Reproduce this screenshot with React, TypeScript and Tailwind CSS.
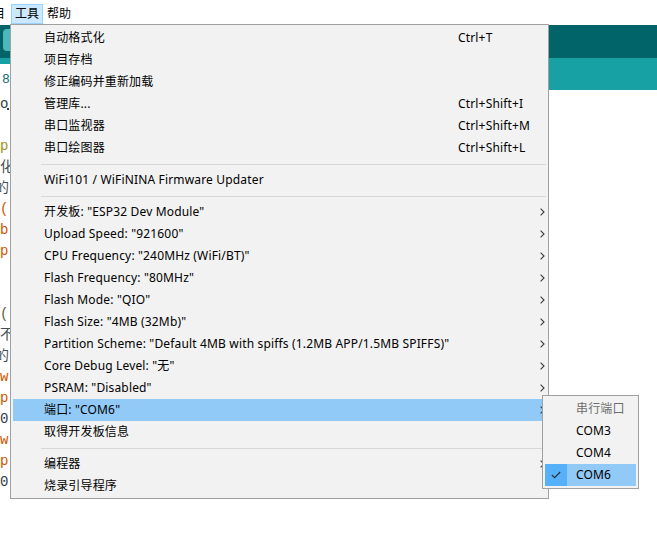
import React from 'react';

const uiFont = { fontFamily: '"Noto Sans", "Noto Sans CJK SC", sans-serif' };
const codeFont = { fontFamily: '"Liberation Mono", "Noto Sans CJK SC", monospace' };

type Item =
  | { kind: 'sep' }
  | { kind: 'item'; label: string; shortcut?: string; sub?: boolean; active?: boolean };

const items: Item[] = [
  { kind: 'item', label: '自动格式化', shortcut: 'Ctrl+T' },
  { kind: 'item', label: '项目存档' },
  { kind: 'item', label: '修正编码并重新加载' },
  { kind: 'item', label: '管理库...', shortcut: 'Ctrl+Shift+I' },
  { kind: 'item', label: '串口监视器', shortcut: 'Ctrl+Shift+M' },
  { kind: 'item', label: '串口绘图器', shortcut: 'Ctrl+Shift+L' },
  { kind: 'sep' },
  { kind: 'item', label: 'WiFi101 / WiFiNINA Firmware Updater' },
  { kind: 'sep' },
  { kind: 'item', label: '开发板: "ESP32 Dev Module"', sub: true },
  { kind: 'item', label: 'Upload Speed: "921600"', sub: true },
  { kind: 'item', label: 'CPU Frequency: "240MHz (WiFi/BT)"', sub: true },
  { kind: 'item', label: 'Flash Frequency: "80MHz"', sub: true },
  { kind: 'item', label: 'Flash Mode: "QIO"', sub: true },
  { kind: 'item', label: 'Flash Size: "4MB (32Mb)"', sub: true },
  { kind: 'item', label: 'Partition Scheme: "Default 4MB with spiffs (1.2MB APP/1.5MB SPIFFS)"', sub: true },
  { kind: 'item', label: 'Core Debug Level: "无"', sub: true },
  { kind: 'item', label: 'PSRAM: "Disabled"', sub: true },
  { kind: 'item', label: '端口: "COM6"', sub: true, active: true },
  { kind: 'item', label: '取得开发板信息' },
  { kind: 'sep' },
  { kind: 'item', label: '编程器', sub: true },
  { kind: 'item', label: '烧录引导程序' },
];

// editor is scrolled; only the first column peeks out left of the menu
const code: { text: string; color: string; shift?: boolean }[] = [
  { text: 'o', color: '#2f3a3e' },
  { text: '', color: '#434f54' },
  { text: 'p', color: '#a08f1c' },
  { text: '化', color: '#434f54' },
  { text: '的', color: '#434f54', shift: true },
  { text: '(', color: '#d35400' },
  { text: 'b', color: '#d35400' },
  { text: 'p', color: '#d35400' },
  { text: '', color: '#434f54' },
  { text: '', color: '#434f54' },
  { text: '(', color: '#5a5a3a' },
  { text: '不', color: '#434f54' },
  { text: '的', color: '#434f54', shift: true },
  { text: 'w', color: '#d35400' },
  { text: 'p', color: '#d35400' },
  { text: '0', color: '#2f3a4e' },
  { text: 'w', color: '#d35400' },
  { text: 'p', color: '#d35400' },
  { text: '0', color: '#2f3a4e' },
];

function Chevron() {
  return (
    <svg width="5" height="8" viewBox="0 0 5 8" className="ml-auto mr-[1px]">
      <path d="M0.6 0.6 L4 4 L0.6 7.4" fill="none" stroke="#3c3c3c" strokeWidth="1.1" />
    </svg>
  );
}

export default function App() {
  return (
    <div className="relative w-[657px] h-[533px] overflow-hidden bg-white text-black" style={uiFont}>
      {/* menu bar */}
      <div className="flex h-[24px] text-[12px]">
        <span className="-ml-[7px] mt-[4px] h-[20px] leading-[19px]">目</span>
        <span className="ml-[6px] mt-[4px] h-[20px] px-[3px] leading-[18px] border border-[#99d1ff] bg-[#cce8ff]">
          工具
        </span>
        <span className="ml-[4px] mt-[4px] h-[20px] leading-[19px]">帮助</span>
      </div>

      {/* toolbar */}
      <div className="mt-[1px] h-[33px] bg-[#006468] flex items-start">
        <div className="ml-[3px] mt-[4px] w-[26px] h-[22px] rounded-[4px] bg-[#4db7bb] flex items-center justify-center">
          <div className="w-[4px] h-[4px] bg-[#e6f4f4]" />
        </div>
      </div>

      {/* tab bar */}
      <div className="h-[32px] bg-[#17a1a5] flex items-end">
        <div className="h-[26px] w-[120px] bg-white pl-[2px] text-[13px] leading-[31px] text-[#0e6b6f]" style={codeFont}>
          8
        </div>
      </div>

      {/* editor */}
      <div className="pt-[4px] text-[14px] leading-[21px]" style={codeFont}>
        {code.map((l, i) => (
          <div key={i} className="h-[21px] whitespace-pre" style={{ color: l.color }}>
            <span className={l.shift ? '-ml-[5px] inline-block' : ''}>{l.text}</span>
            {i === 0 && <span className="-ml-[1px] inline-block w-[2px] h-[2px] bg-[#2f3a3e] align-[-2px]" />}
          </div>
        ))}
      </div>

      {/* tools menu */}
      <div className="absolute left-[10px] top-[24px] w-[539px] h-[475px] border border-[#a0a0a0] bg-[#f2f2f2] px-[2px] pt-[2px] text-[12px] tracking-[0.16px]">
        {items.map((it, i) =>
          it.kind === 'sep' ? (
            <div key={i} className="h-[10px] flex items-center">
              <div className="ml-[28px] h-px flex-1 bg-[#d7d7d7]" />
            </div>
          ) : (
            <div
              key={i}
              className={`h-[22px] flex items-center pl-[31px] whitespace-nowrap ${it.active ? 'bg-[#91c9f7]' : ''}`}
            >
              <span className="w-[414px] shrink-0">{it.label}</span>
              {it.shortcut && <span>{it.shortcut}</span>}
              {it.sub && <Chevron />}
            </div>
          )
        )}
      </div>

      {/* port submenu */}
      <div className="absolute left-[542px] top-[395px] w-[97px] h-[94px] border border-[#a0a0a0] bg-[#f2f2f2] p-[2px] text-[12px] tracking-[0.16px]">
        <div className="h-[22px] flex items-center pl-[31px] text-[#6d6d6d]">串行端口</div>
        <div className="h-[22px] flex items-center pl-[31px]">COM3</div>
        <div className="h-[22px] flex items-center pl-[31px]">COM4</div>
        <div className="h-[22px] flex items-center bg-[#91c9f7]">
          <div className="w-[22px] h-[22px] bg-[#56b0fa] flex items-center justify-center">
            <svg width="10" height="8" viewBox="0 0 10 8">
              <path d="M0.8 3.8 L3.6 6.6 L9.2 1" fill="none" stroke="#2b2b2b" strokeWidth="1.1" />
            </svg>
          </div>
          <span className="ml-[9px]">COM6</span>
        </div>
      </div>
    </div>
  );
}
